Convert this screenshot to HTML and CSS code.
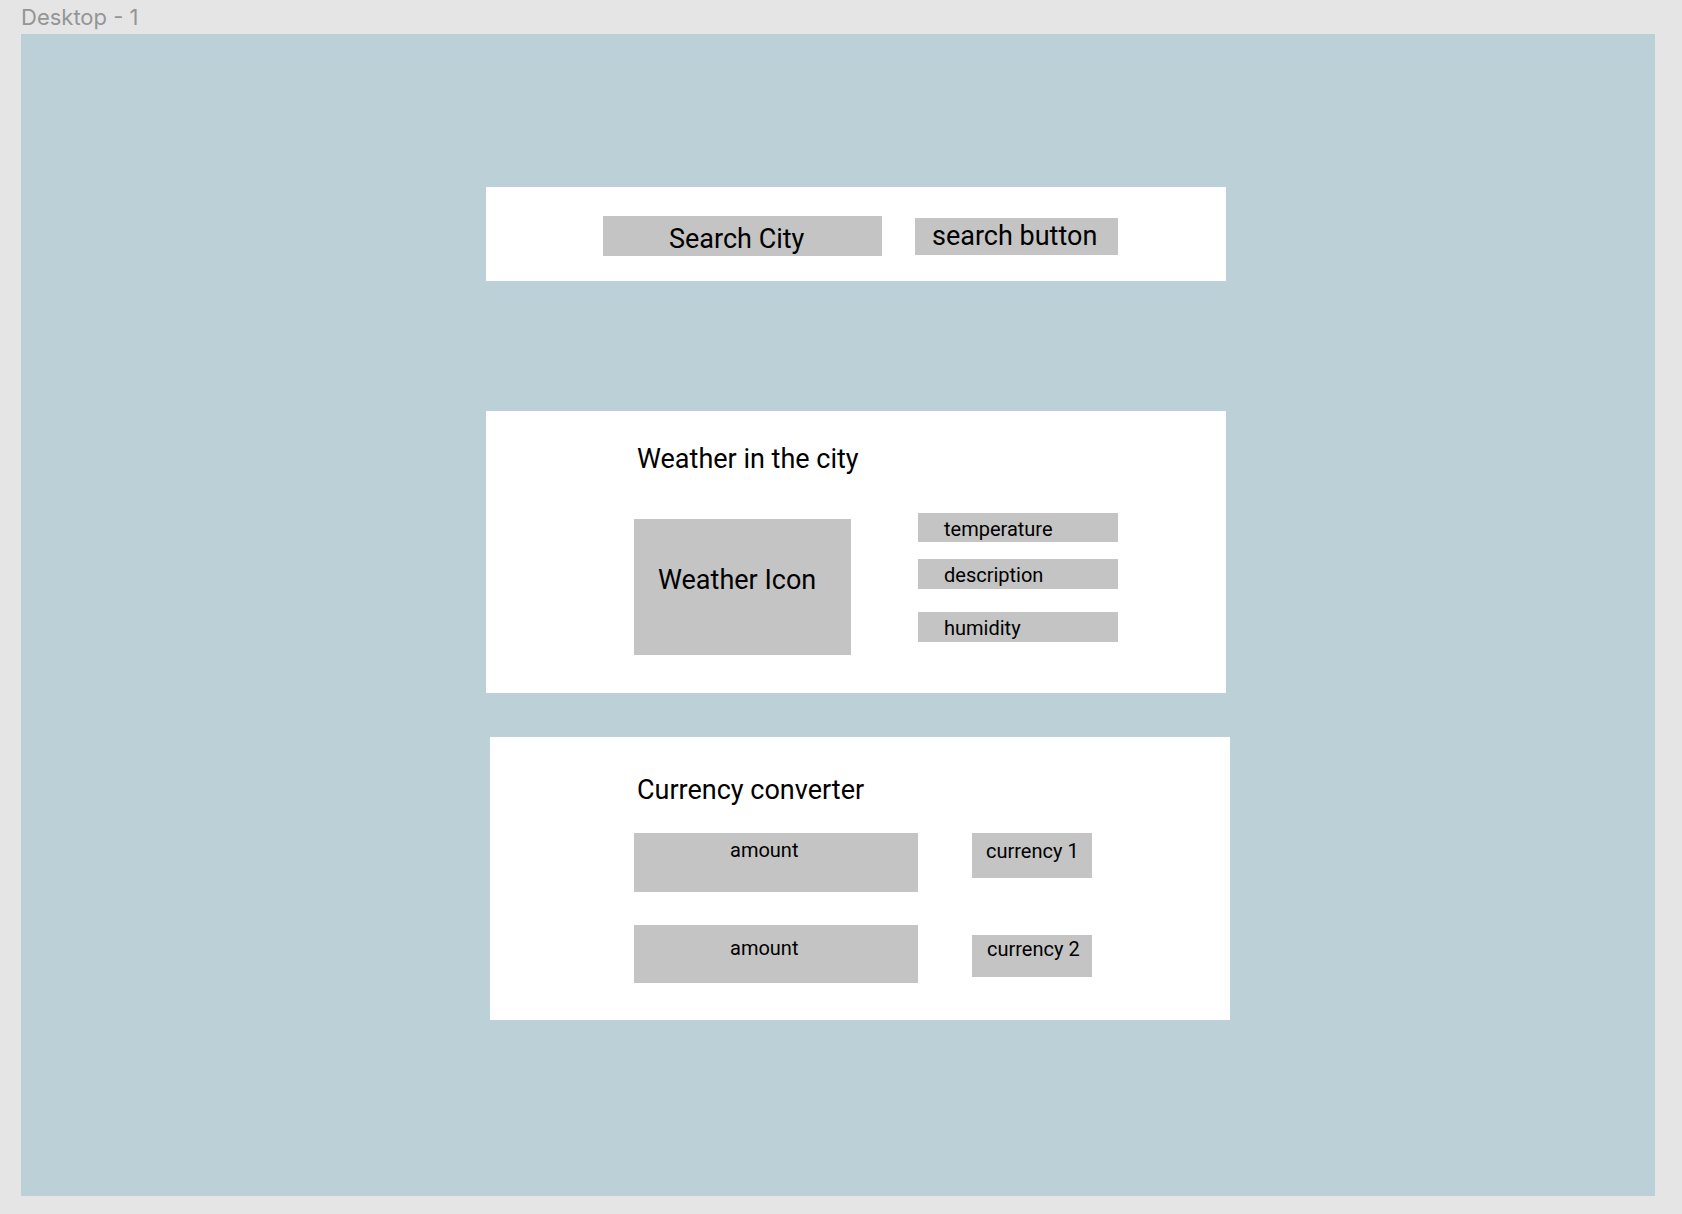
FILE: index.html
```html
<!DOCTYPE html>
<html lang="en">
<head>
<meta charset="utf-8">
<title>Desktop - 1</title>
<link rel="stylesheet" href="styles.css">
</head>
<body>
<div class="frame-label">Desktop - 1</div>
<main class="canvas">
  <section class="card card-search">
    <div class="box search-city">Search City</div>
    <div class="box search-btn">search button</div>
  </section>

  <section class="card card-weather">
    <h2 class="title">Weather in the city</h2>
    <div class="weather-row">
      <div class="box weather-icon">Weather Icon</div>
      <div class="weather-info">
        <div class="box info info-temp">temperature</div>
        <div class="box info info-desc">description</div>
        <div class="box info info-hum">humidity</div>
      </div>
    </div>
  </section>

  <section class="card card-currency">
    <h2 class="title">Currency converter</h2>
    <div class="cur-row cur-row-1">
      <div class="box amount amount-1">amount</div>
      <div class="box currency currency-1">currency 1</div>
    </div>
    <div class="cur-row cur-row-2">
      <div class="box amount amount-2">amount</div>
      <div class="box currency currency-2">currency 2</div>
    </div>
  </section>
</main>
</body>
</html>
```

FILE: styles.css
```css
* { box-sizing: border-box; margin: 0; padding: 0; }

html, body {
  background: #e5e5e5;
}

body {
  width: 1682px;
  height: 1214px;
  overflow: hidden;
  font-family: Roboto, "Liberation Sans", Arial, sans-serif;
  color: #000;
}

.frame-label {
  height: 34px;
  padding: 4px 0 0 21px;
  font-family: Inter, Roboto, "Liberation Sans", sans-serif;
  font-size: 22px;
  line-height: 27px;
  color: #959595;
}

.canvas {
  margin-left: 21px;
  width: 1634px;
  height: 1162px;
  background: #bcd0d8;
  padding-top: 153px;
  display: flex;
  flex-direction: column;
  align-items: flex-start;
}

.card {
  background: #ffffff;
  width: 740px;
}

.box {
  background: #c4c4c4;
}

.title {
  font-weight: 400;
  font-size: 27px;
  line-height: 32px;
}

/* search card */
.card-search {
  margin-left: 465px;
  height: 94px;
  display: flex;
  align-items: flex-start;
  gap: 33px;
  padding: 29px 0 0 117px;
}

.search-city {
  width: 279px;
  height: 40px;
  font-size: 27px;
  line-height: 32px;
  padding: 7px 0 0 66px;
}

.search-btn {
  margin-top: 2px;
  width: 203px;
  height: 37px;
  font-size: 27px;
  line-height: 32px;
  padding: 2px 0 0 17px;
}

/* weather card */
.card-weather {
  margin-left: 465px;
  margin-top: 130px;
  height: 282px;
  padding: 32px 0 0 148px;
}

.card-weather .title {
  margin-left: 3px;
}

.weather-row {
  display: flex;
  align-items: flex-start;
  gap: 67px;
  margin-top: 38px;
}

.weather-icon {
  margin-top: 6px;
  width: 217px;
  height: 136px;
  font-size: 27px;
  line-height: 32px;
  padding: 45px 0 0 24px;
}

.weather-info {
  display: flex;
  flex-direction: column;
  width: 200px;
}

.info {
  font-size: 20px;
  line-height: 24px;
  padding: 4px 0 0 26px;
  height: 30px;
}

.info-temp { height: 29px; }
.info-desc { margin-top: 17px; }
.info-hum { margin-top: 23px; }

/* currency card */
.card-currency {
  margin-left: 469px;
  margin-top: 44px;
  height: 283px;
  padding: 37px 0 0 144px;
}

.card-currency .title {
  margin-left: 3px;
}

.cur-row {
  display: flex;
  align-items: flex-start;
  gap: 54px;
}

.cur-row-1 { margin-top: 27px; }
.cur-row-2 { margin-top: 33px; }

.amount {
  width: 284px;
  font-size: 20px;
  line-height: 24px;
  padding-left: 96px;
}

.amount-1 { height: 59px; padding-top: 5px; }
.amount-2 { height: 58px; padding-top: 11px; }

.currency {
  width: 120px;
  font-size: 20px;
  line-height: 24px;
}

.currency-1 { height: 45px; padding: 6px 0 0 14px; }
.currency-2 { height: 42px; margin-top: 10px; padding: 2px 0 0 15px; }
```
